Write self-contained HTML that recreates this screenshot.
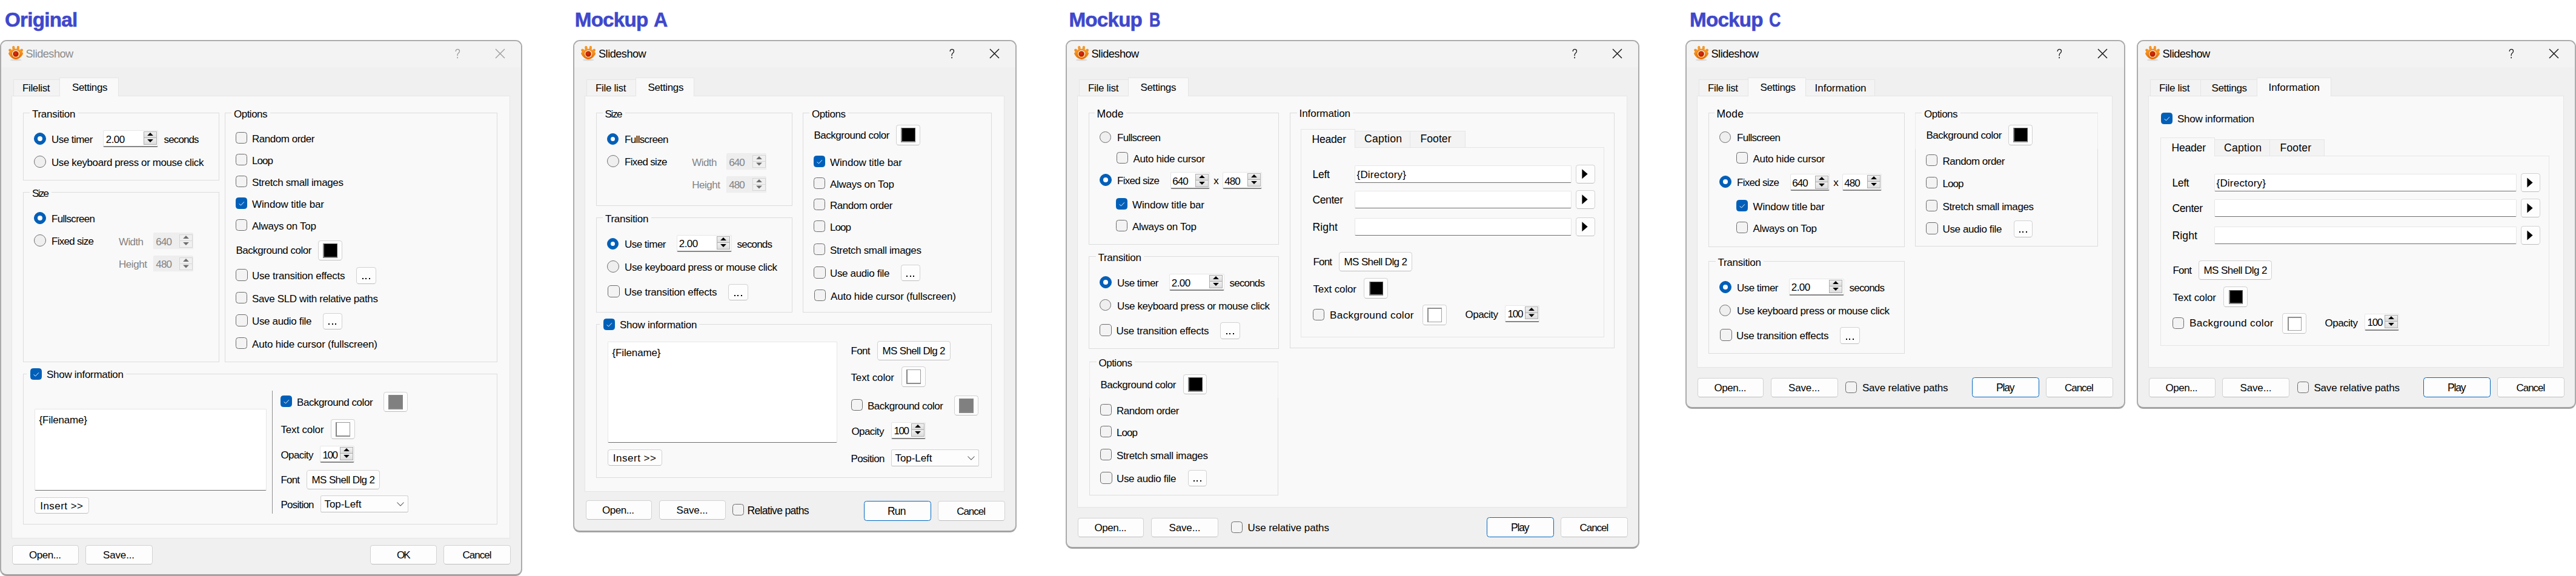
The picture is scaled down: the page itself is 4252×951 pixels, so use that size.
<!DOCTYPE html>
<html><head><meta charset="utf-8"><title>Slideshow mockups</title>
<style>
html,body{margin:0;padding:0}
body{width:4252px;height:951px;background:#fff;position:relative;overflow:hidden;font-family:"Liberation Sans",sans-serif;font-size:17px;color:#000}
body div,body span.t,.a{position:absolute;box-sizing:border-box}
.t{white-space:pre;line-height:20px;height:20px}
.dlg{background:#f0f0f0;border:2px solid #ababab;border-bottom:3px solid #a3a3a3;border-radius:11px;overflow:hidden}
.dlg .tb{left:0;top:0;right:0;height:43px;background:#f3f3f3}
.pane{background:#f9f9f9;border:1px solid #e5e5e5}
.tab{background:#f3f3f3;border:1px solid #e5e5e5;border-bottom:none}
.tab.sel{background:#f9f9f9}
.gb{border:1px solid #dcdcdc}
.cb{width:19px;height:19px;border:1.3px solid #6c6c6c;border-radius:4.5px;background:#f3f3f3}
.cb.on{width:19px;height:19px;border-radius:4.5px;background:#005fb8;border-color:#005fb8}
.cb svg{position:absolute;left:-1.3px;top:-1.3px;width:19px;height:19px}
.rb{width:20px;height:20px;border:1.3px solid #6f6f6f;border-radius:50%;background:#efefef}
.rb.on{width:19px;height:19px;background:#005fb8;border-color:#005fb8}
.rb.big{width:20px;height:20px}
.rb.big i{left:4.7px !important;top:4.7px !important;width:8px !important;height:8px !important}
.rb i{position:absolute;left:4.5px;top:4.5px;width:7.4px;height:7.4px;border-radius:50%;background:#fff}
.sp{background:#fff;border:1px solid #e6e6e6;border-bottom:2px solid #858585;border-radius:2.5px}
.sp.dis{background:#eeeeee;border-color:#ececec;border-bottom:1px solid #f6f6f6}
.sb{background:linear-gradient(#f1f1f1,#dcdcdc);border:1px solid #adadad}
.sb.dis{background:#f0f0f0;border-color:#d6d6d6}
.sb svg{position:absolute;left:-1px;top:-1px}
.sb.dn{border-top:none}
.sb.dn svg{top:0}
.btn{background:#fdfdfd;border:1px solid #d2d2d2;border-bottom-color:#bdbdbd;border-radius:4.5px}
.btn.def{border:1.6px solid #0067c0}
.ed{background:#fff;border:1px solid #e6e6e6;border-bottom:1.4px solid #6e6e6e;border-radius:2px}
</style></head>
<body>
<span class="t" style="left:8px;top:23px;font-size:33.2px;letter-spacing:-0.74px;color:#3f48cc;font-weight:bold;-webkit-text-stroke:0.6px #3f48cc;">Original</span>
<div class="dlg" style="left:0px;top:66px;width:862px;height:885px;"><div class="tb"></div></div>
<svg class="a" style="left:13px;top:75px" width="27" height="27" viewBox="0 0 27 27"><defs><linearGradient id="og" x1="0" y1="0" x2="0" y2="1"><stop offset="0" stop-color="#f9a334"/><stop offset="0.55" stop-color="#f08410"/><stop offset="1" stop-color="#e36c05"/></linearGradient><radialGradient id="rg" cx="0.45" cy="0.4" r="0.6"><stop offset="0" stop-color="#d8340f"/><stop offset="1" stop-color="#b01500"/></radialGradient></defs><ellipse cx="13.2" cy="24" rx="9.5" ry="1.5" fill="#bdbdbd" opacity=".55"/><g fill="url(#og)"><circle cx="9.3" cy="2.9" r="2.05"/><circle cx="16.9" cy="2.9" r="2.05"/><path d="M7.25 3 L11.35 3 L12.1 9 L8 9.5 Z"/><path d="M18.95 3 L14.85 3 L14.1 9 L18.2 9.5 Z"/><circle cx="3.5" cy="7.6" r="2.2"/><circle cx="22.7" cy="7.6" r="2.2"/><path d="M1.6 8.8 L5.2 6.2 L8.6 10.2 L4.6 12.6 Z"/><path d="M24.6 8.8 L21 6.2 L17.6 10.2 L21.6 12.6 Z"/><path d="M0.9 13.3 C4 8 8.8 5.6 13.1 5.6 C17.4 5.6 22.2 8 25.3 13.3 C22.3 19.6 17.6 22.9 13.1 22.9 C8.6 22.9 3.9 19.6 0.9 13.3 Z"/></g><circle cx="13.1" cy="13.9" r="6.9" fill="#d96306"/><circle cx="13.2" cy="13.9" r="6.2" fill="#fff"/><circle cx="13.1" cy="14" r="5.2" fill="#e6760f"/><circle cx="13" cy="14.1" r="4.2" fill="url(#rg)"/></svg>
<span class="t" style="left:42.5px;top:79px;font-size:18.2px;letter-spacing:-0.52px;color:#8b8b8b;">Slideshow</span>
<svg class="a" style="left:750.8px;top:80px" width="10" height="18" viewBox="0 0 10 18"><path d="M1.2 4.9 C1.2 2.5 2.7 1.4 4.4 1.4 C6.2 1.4 7.5 2.6 7.5 4.4 C7.5 6 6.6 6.9 5.6 7.8 C4.6 8.7 4.1 9.5 4.1 10.8 L4.1 12.2" fill="none" stroke="#9a9a9a" stroke-width="1.3"/><rect x="3.3" y="14.3" width="1.7" height="1.9" fill="#9a9a9a"/></svg>
<svg class="a" style="left:817px;top:80px" width="17" height="17"><path d="M1 1 L16 16 M16 1 L1 16" stroke="#9a9a9a" stroke-width="1.25" fill="none"/></svg>
<div class="pane" style="left:19px;top:158px;width:823px;height:731px;"></div>
<div class="tab" style="left:22px;top:131px;width:77px;height:27px;"></div>
<span class="t" style="left:37px;top:136px;font-size:17px;letter-spacing:-0.37px;">Filelist</span>
<div class="tab sel" style="left:98px;top:128px;width:98px;height:31px;"></div>
<span class="t" style="left:119px;top:135px;font-size:17px;letter-spacing:-0.43px;">Settings</span>
<div class="gb" style="left:38px;top:186px;width:324px;height:112px;"></div>
<div style="left:49px;top:185px;width:80px;height:3px;background:#f9f9f9"></div>
<span class="t" style="left:53px;top:179px;font-size:17px;letter-spacing:-0.28px;">Transition</span>
<div class="rb on big" style="left:56px;top:219px;width:20px;height:20px"><i></i></div>
<span class="t" style="left:85px;top:221px;font-size:17px;letter-spacing:-0.54px;">Use timer</span>
<div class="sp" style="left:170px;top:215px;width:91px;height:28px;"></div>
<div class="sb" style="left:237px;top:217px;width:22px;height:11px;"><svg width="22" height="11"><polygon points="6.1,7 15.9,7 11,1.9" fill="#000"/></svg></div>
<div class="sb dn" style="left:237px;top:228px;width:22px;height:11px;"><svg width="22" height="11"><polygon points="6.1,2 15.9,2 11,7.1" fill="#000"/></svg></div>
<span class="t" style="left:174.7px;top:221px;font-size:17px;letter-spacing:-0.5px;">2.00</span>
<span class="t" style="left:270.6px;top:221px;font-size:17px;letter-spacing:-0.89px;">seconds</span>
<div class="rb" style="left:56px;top:257px;width:20px;height:20px"></div>
<span class="t" style="left:85px;top:259px;font-size:17px;letter-spacing:-0.41px;">Use keyboard press or mouse click</span>
<div class="gb" style="left:38px;top:317px;width:324px;height:281px;"></div>
<div style="left:49px;top:316px;width:36px;height:3px;background:#f9f9f9"></div>
<span class="t" style="left:53px;top:310px;font-size:17px;letter-spacing:-1.69px;">Size</span>
<div class="rb on big" style="left:56px;top:350px;width:20px;height:20px"><i></i></div>
<span class="t" style="left:85px;top:352px;font-size:17px;letter-spacing:-0.71px;">Fullscreen</span>
<div class="rb" style="left:56px;top:387px;width:20px;height:20px"></div>
<span class="t" style="left:85px;top:389px;font-size:17px;letter-spacing:-0.72px;">Fixed size</span>
<span class="t" style="left:196px;top:390px;font-size:17px;letter-spacing:-0.62px;color:#838383;">Width</span>
<div class="sp dis" style="left:253px;top:384px;width:66px;height:28px;"></div>
<div class="sb dis" style="left:296px;top:387px;width:22px;height:11px;"><svg width="22" height="11"><polygon points="6.1,7 15.9,7 11,1.9" fill="#6e6e6e"/></svg></div>
<div class="sb dis dn" style="left:296px;top:398px;width:22px;height:11px;"><svg width="22" height="11"><polygon points="6.1,2 15.9,2 11,7.1" fill="#6e6e6e"/></svg></div>
<span class="t" style="left:257.3px;top:390px;font-size:17px;letter-spacing:-0.83px;color:#838383;">640</span>
<span class="t" style="left:196px;top:427px;font-size:17px;letter-spacing:-0.43px;color:#838383;">Height</span>
<div class="sp dis" style="left:253px;top:422px;width:66px;height:27px;"></div>
<div class="sb dis" style="left:296px;top:425px;width:22px;height:11px;"><svg width="22" height="11"><polygon points="6.1,7 15.9,7 11,1.9" fill="#6e6e6e"/></svg></div>
<div class="sb dis dn" style="left:296px;top:436px;width:22px;height:10px;"><svg width="22" height="10"><polygon points="6.1,1.5 15.9,1.5 11,6.6" fill="#6e6e6e"/></svg></div>
<span class="t" style="left:257.3px;top:427px;font-size:17px;letter-spacing:-0.83px;color:#838383;">480</span>
<div class="gb" style="left:371px;top:186px;width:450px;height:412px;"></div>
<div style="left:382px;top:185px;width:64px;height:3px;background:#f9f9f9"></div>
<span class="t" style="left:386px;top:179px;font-size:17px;letter-spacing:-0.51px;">Options</span>
<div class="cb" style="left:389px;top:218px"></div>
<span class="t" style="left:416px;top:220px;font-size:17px;letter-spacing:-0.47px;">Random order</span>
<div class="cb" style="left:389px;top:254px"></div>
<span class="t" style="left:416px;top:256px;font-size:17px;letter-spacing:-0.94px;">Loop</span>
<div class="cb" style="left:389px;top:290px"></div>
<span class="t" style="left:416px;top:292px;font-size:17px;letter-spacing:-0.36px;">Stretch small images</span>
<div class="cb on" style="left:389px;top:326px"><svg viewBox="0 0 19 19"><path d="M5.6 10.5 L8.6 12.9 L13.9 7.3" fill="none" stroke="#fff" stroke-width="0.95"/></svg></div>
<span class="t" style="left:416px;top:328px;font-size:17px;letter-spacing:-0.13px;">Window title bar</span>
<div class="cb" style="left:389px;top:362px"></div>
<span class="t" style="left:416px;top:364px;font-size:17px;letter-spacing:-0.28px;">Always on Top</span>
<span class="t" style="left:389.5px;top:404px;font-size:17px;letter-spacing:-0.49px;">Background color</span>
<div class="btn" style="left:525px;top:397px;width:40px;height:33px;"></div>
<div style="left:533px;top:402px;width:24px;height:24px;background:#000;border:1px solid #555;border-left:2px solid #858585;border-bottom:2px solid #8a8a8a"></div>
<div class="cb" style="left:389px;top:444px;width:20px;height:20px;border-radius:5px"></div>
<span class="t" style="left:416px;top:446px;font-size:17px;letter-spacing:-0.23px;">Use transition effects</span>
<div class="btn" style="left:588px;top:441px;width:33px;height:28px;"></div>
<div style="left:598px;top:459px;width:2px;height:2px;background:#000"></div>
<div style="left:603px;top:459px;width:2px;height:2px;background:#000"></div>
<div style="left:609px;top:459px;width:2px;height:2px;background:#000"></div>
<div class="cb" style="left:389px;top:482px"></div>
<span class="t" style="left:416px;top:484px;font-size:17px;letter-spacing:-0.35px;">Save SLD with relative paths</span>
<div class="cb" style="left:389px;top:519px;width:20px;height:20px;border-radius:5px"></div>
<span class="t" style="left:416px;top:521px;font-size:17px;letter-spacing:-0.35px;">Use audio file</span>
<div class="btn" style="left:533px;top:517px;width:32px;height:27px;"></div>
<div style="left:542px;top:534px;width:2px;height:2px;background:#000"></div>
<div style="left:548px;top:534px;width:2px;height:2px;background:#000"></div>
<div style="left:553px;top:534px;width:2px;height:2px;background:#000"></div>
<div class="cb" style="left:389px;top:557px"></div>
<span class="t" style="left:416px;top:559px;font-size:17px;letter-spacing:-0.2px;">Auto hide cursor (fullscreen)</span>
<div class="gb" style="left:38px;top:617px;width:783px;height:249px;"></div>
<div style="left:44px;top:607px;width:164px;height:22px;background:#f9f9f9"></div>
<div class="cb on" style="left:50px;top:608px"><svg viewBox="0 0 19 19"><path d="M5.6 10.5 L8.6 12.9 L13.9 7.3" fill="none" stroke="#fff" stroke-width="0.95"/></svg></div>
<span class="t" style="left:77px;top:609px;font-size:17px;letter-spacing:-0.29px;">Show information</span>
<div class="ed" style="left:57px;top:675px;width:383px;height:135px;"></div>
<span class="t" style="left:64.5px;top:684px;font-size:17px;letter-spacing:-0.2px;">{Filename}</span>
<div class="btn" style="left:57px;top:821px;width:90px;height:27px;"></div>
<span class="t" style="left:66.3px;top:826px;font-size:17px;letter-spacing:0.45px;">Insert &gt;&gt;</span>
<div style="left:449px;top:645px;width:1px;height:203px;background:#8e8e8e"></div>
<div class="cb on" style="left:463px;top:653px"><svg viewBox="0 0 19 19"><path d="M5.6 10.5 L8.6 12.9 L13.9 7.3" fill="none" stroke="#fff" stroke-width="0.95"/></svg></div>
<span class="t" style="left:490px;top:655px;font-size:17px;letter-spacing:-0.45px;">Background color</span>
<div class="btn" style="left:633px;top:647px;width:40px;height:33px;"></div>
<div style="left:641px;top:652px;width:24px;height:24px;background:#808080;border:1px solid #858585;border-left:2px solid #858585;border-bottom:2px solid #8a8a8a"></div>
<span class="t" style="left:463.5px;top:700px;font-size:17px;letter-spacing:-0.19px;">Text color</span>
<div class="btn" style="left:546px;top:692px;width:40px;height:33px;"></div>
<div style="left:554px;top:697px;width:24px;height:24px;background:#fff;border:1px solid #9a9a9a;border-left:2px solid #858585;border-bottom:2px solid #8a8a8a"></div>
<span class="t" style="left:463.5px;top:742px;font-size:17px;letter-spacing:-0.61px;">Opacity</span>
<div class="sp" style="left:528px;top:736px;width:57px;height:28px;"></div>
<div class="sb" style="left:561px;top:738px;width:22px;height:11px;"><svg width="22" height="11"><polygon points="6.1,7 15.9,7 11,1.9" fill="#000"/></svg></div>
<div class="sb dn" style="left:561px;top:749px;width:22px;height:11px;"><svg width="22" height="11"><polygon points="6.1,2 15.9,2 11,7.1" fill="#000"/></svg></div>
<span class="t" style="left:532.5px;top:742px;font-size:17px;letter-spacing:-1.43px;">100</span>
<span class="t" style="left:463.5px;top:783px;font-size:17px;letter-spacing:-0.84px;">Font</span>
<div class="btn" style="left:506px;top:776px;width:121px;height:32px;"></div>
<span class="t" style="left:514.5px;top:783px;font-size:17px;letter-spacing:-0.61px;">MS Shell Dlg 2</span>
<span class="t" style="left:463.5px;top:824px;font-size:17px;letter-spacing:-0.78px;">Position</span>
<div class="btn" style="left:529px;top:818px;width:145px;height:28px;border-radius:2.5px"></div>
<span class="t" style="left:535.5px;top:823px;font-size:17px;letter-spacing:-0.06px;">Top-Left</span>
<svg class="a" style="left:653.5px;top:827.95px" width="14" height="9"><path d="M1.5 1.5 L7 7 L12.5 1.5" fill="none" stroke="#4a4a4a" stroke-width="1.05"/></svg>
<div class="btn" style="left:20px;top:900px;width:110px;height:32px;"></div>
<span class="t" style="left:48px;top:907px;font-size:17px;letter-spacing:-0.46px;">Open...</span>
<div class="btn" style="left:141px;top:900px;width:111px;height:32px;"></div>
<span class="t" style="left:170px;top:907px;font-size:17px;letter-spacing:-0.15px;">Save...</span>
<div class="btn" style="left:611px;top:900px;width:110px;height:32px;"></div>
<span class="t" style="left:655px;top:907px;font-size:17px;letter-spacing:-2.07px;">OK</span>
<div class="btn" style="left:732px;top:900px;width:111px;height:32px;"></div>
<span class="t" style="left:763.5px;top:907px;font-size:17px;letter-spacing:-0.99px;">Cancel</span>
<span class="t" style="left:948.8px;top:23px;font-size:33.2px;letter-spacing:-0.8px;color:#3f48cc;font-weight:bold;-webkit-text-stroke:0.6px #3f48cc;">Mockup</span>
<span class="t" style="left:1078.6px;top:23px;font-size:33.2px;color:#3f48cc;font-weight:bold;-webkit-text-stroke:0.6px #3f48cc;transform-origin:0 0;transform:scaleX(0.97)">A</span>
<div class="dlg" style="left:946px;top:66px;width:732px;height:813px;"><div class="tb"></div></div>
<svg class="a" style="left:958px;top:75px" width="27" height="27" viewBox="0 0 27 27"><defs><linearGradient id="og" x1="0" y1="0" x2="0" y2="1"><stop offset="0" stop-color="#f9a334"/><stop offset="0.55" stop-color="#f08410"/><stop offset="1" stop-color="#e36c05"/></linearGradient><radialGradient id="rg" cx="0.45" cy="0.4" r="0.6"><stop offset="0" stop-color="#d8340f"/><stop offset="1" stop-color="#b01500"/></radialGradient></defs><ellipse cx="13.2" cy="24" rx="9.5" ry="1.5" fill="#bdbdbd" opacity=".55"/><g fill="url(#og)"><circle cx="9.3" cy="2.9" r="2.05"/><circle cx="16.9" cy="2.9" r="2.05"/><path d="M7.25 3 L11.35 3 L12.1 9 L8 9.5 Z"/><path d="M18.95 3 L14.85 3 L14.1 9 L18.2 9.5 Z"/><circle cx="3.5" cy="7.6" r="2.2"/><circle cx="22.7" cy="7.6" r="2.2"/><path d="M1.6 8.8 L5.2 6.2 L8.6 10.2 L4.6 12.6 Z"/><path d="M24.6 8.8 L21 6.2 L17.6 10.2 L21.6 12.6 Z"/><path d="M0.9 13.3 C4 8 8.8 5.6 13.1 5.6 C17.4 5.6 22.2 8 25.3 13.3 C22.3 19.6 17.6 22.9 13.1 22.9 C8.6 22.9 3.9 19.6 0.9 13.3 Z"/></g><circle cx="13.1" cy="13.9" r="6.9" fill="#d96306"/><circle cx="13.2" cy="13.9" r="6.2" fill="#fff"/><circle cx="13.1" cy="14" r="5.2" fill="#e6760f"/><circle cx="13" cy="14.1" r="4.2" fill="url(#rg)"/></svg>
<span class="t" style="left:988px;top:79px;font-size:18.2px;letter-spacing:-0.52px;color:#000;">Slideshow</span>
<svg class="a" style="left:1567px;top:80px" width="10" height="18" viewBox="0 0 10 18"><path d="M1.2 4.9 C1.2 2.5 2.7 1.4 4.4 1.4 C6.2 1.4 7.5 2.6 7.5 4.4 C7.5 6 6.6 6.9 5.6 7.8 C4.6 8.7 4.1 9.5 4.1 10.8 L4.1 12.2" fill="none" stroke="#1a1a1a" stroke-width="1.3"/><rect x="3.3" y="14.3" width="1.7" height="1.9" fill="#1a1a1a"/></svg>
<svg class="a" style="left:1633px;top:80px" width="17" height="17"><path d="M1 1 L16 16 M16 1 L1 16" stroke="#1a1a1a" stroke-width="1.45" fill="none"/></svg>
<div class="pane" style="left:965px;top:158px;width:693px;height:654px;"></div>
<div class="tab" style="left:968px;top:131px;width:82px;height:27px;"></div>
<span class="t" style="left:983px;top:136px;font-size:17px;letter-spacing:-0.3px;">File list</span>
<div class="tab sel" style="left:1049px;top:128px;width:97px;height:31px;"></div>
<span class="t" style="left:1069.5px;top:135px;font-size:17px;letter-spacing:-0.35px;">Settings</span>
<div class="gb" style="left:984px;top:186px;width:324px;height:154px;"></div>
<div style="left:995px;top:185px;width:37px;height:3px;background:#f9f9f9"></div>
<span class="t" style="left:998.5px;top:179px;font-size:17px;letter-spacing:-1.36px;">Size</span>
<div class="rb on" style="left:1002px;top:220px;width:19px;height:19px"><i></i></div>
<span class="t" style="left:1031px;top:221px;font-size:17px;letter-spacing:-0.66px;">Fullscreen</span>
<div class="rb" style="left:1002px;top:256px;width:20px;height:20px"></div>
<span class="t" style="left:1031px;top:258px;font-size:17px;letter-spacing:-0.67px;">Fixed size</span>
<span class="t" style="left:1142.2px;top:259px;font-size:17px;letter-spacing:-0.54px;color:#838383;">Width</span>
<div class="sp dis" style="left:1199px;top:253px;width:66px;height:28px;"></div>
<div class="sb dis" style="left:1242px;top:256px;width:22px;height:11px;"><svg width="22" height="11"><polygon points="6.1,7 15.9,7 11,1.9" fill="#6e6e6e"/></svg></div>
<div class="sb dis dn" style="left:1242px;top:267px;width:22px;height:10px;"><svg width="22" height="10"><polygon points="6.1,1.5 15.9,1.5 11,6.6" fill="#6e6e6e"/></svg></div>
<span class="t" style="left:1203.3px;top:259px;font-size:17px;letter-spacing:-0.93px;color:#838383;">640</span>
<span class="t" style="left:1142.2px;top:296px;font-size:17px;letter-spacing:-0.47px;color:#838383;">Height</span>
<div class="sp dis" style="left:1199px;top:291px;width:66px;height:28px;"></div>
<div class="sb dis" style="left:1242px;top:294px;width:22px;height:11px;"><svg width="22" height="11"><polygon points="6.1,7 15.9,7 11,1.9" fill="#6e6e6e"/></svg></div>
<div class="sb dis dn" style="left:1242px;top:305px;width:22px;height:10px;"><svg width="22" height="10"><polygon points="6.1,1.5 15.9,1.5 11,6.6" fill="#6e6e6e"/></svg></div>
<span class="t" style="left:1203.3px;top:296px;font-size:17px;letter-spacing:-0.93px;color:#838383;">480</span>
<div class="gb" style="left:984px;top:359px;width:324px;height:157px;"></div>
<div style="left:995px;top:358px;width:80px;height:3px;background:#f9f9f9"></div>
<span class="t" style="left:999px;top:352px;font-size:17px;letter-spacing:-0.28px;">Transition</span>
<div class="rb on" style="left:1002px;top:393px;width:19px;height:19px"><i></i></div>
<span class="t" style="left:1031px;top:394px;font-size:17px;letter-spacing:-0.53px;">Use timer</span>
<div class="sp" style="left:1117px;top:388px;width:91px;height:28px;"></div>
<div class="sb" style="left:1183px;top:390px;width:22px;height:11px;"><svg width="22" height="11"><polygon points="6.1,7 15.9,7 11,1.9" fill="#000"/></svg></div>
<div class="sb dn" style="left:1183px;top:401px;width:22px;height:11px;"><svg width="22" height="11"><polygon points="6.1,2 15.9,2 11,7.1" fill="#000"/></svg></div>
<span class="t" style="left:1120.7px;top:393px;font-size:17px;letter-spacing:-0.5px;">2.00</span>
<span class="t" style="left:1216.6px;top:394px;font-size:17px;letter-spacing:-0.82px;">seconds</span>
<div class="rb" style="left:1002px;top:430px;width:20px;height:20px"></div>
<span class="t" style="left:1031px;top:432px;font-size:17px;letter-spacing:-0.39px;">Use keyboard press or mouse click</span>
<div class="cb" style="left:1003px;top:471px;width:20px;height:20px;border-radius:5px"></div>
<span class="t" style="left:1030.5px;top:473px;font-size:17px;letter-spacing:-0.26px;">Use transition effects</span>
<div class="btn" style="left:1202px;top:469px;width:33px;height:27px;"></div>
<div style="left:1212px;top:487px;width:2px;height:2px;background:#000"></div>
<div style="left:1217px;top:487px;width:2px;height:2px;background:#000"></div>
<div style="left:1223px;top:487px;width:2px;height:2px;background:#000"></div>
<div class="gb" style="left:1325px;top:186px;width:312px;height:330px;"></div>
<div style="left:1336px;top:185px;width:64px;height:3px;background:#f9f9f9"></div>
<span class="t" style="left:1340px;top:179px;font-size:17px;letter-spacing:-0.43px;">Options</span>
<span class="t" style="left:1343.5px;top:214px;font-size:17px;letter-spacing:-0.49px;">Background color</span>
<div class="btn" style="left:1479px;top:206px;width:40px;height:34px;"></div>
<div style="left:1487px;top:211px;width:24px;height:24px;background:#000;border:1px solid #555;border-left:2px solid #858585;border-bottom:2px solid #8a8a8a"></div>
<div class="cb on" style="left:1343px;top:257px"><svg viewBox="0 0 19 19"><path d="M5.6 10.5 L8.6 12.9 L13.9 7.3" fill="none" stroke="#fff" stroke-width="0.95"/></svg></div>
<span class="t" style="left:1370px;top:259px;font-size:17px;letter-spacing:-0.13px;">Window title bar</span>
<div class="cb" style="left:1343px;top:293px"></div>
<span class="t" style="left:1370px;top:295px;font-size:17px;letter-spacing:-0.28px;">Always on Top</span>
<div class="cb" style="left:1343px;top:328px"></div>
<span class="t" style="left:1370px;top:330px;font-size:17px;letter-spacing:-0.47px;">Random order</span>
<div class="cb" style="left:1343px;top:364px"></div>
<span class="t" style="left:1370px;top:366px;font-size:17px;letter-spacing:-0.94px;">Loop</span>
<div class="cb" style="left:1343px;top:402px"></div>
<span class="t" style="left:1370px;top:404px;font-size:17px;letter-spacing:-0.36px;">Stretch small images</span>
<div class="cb" style="left:1343px;top:440px;width:20px;height:20px;border-radius:5px"></div>
<span class="t" style="left:1370px;top:442px;font-size:17px;letter-spacing:-0.35px;">Use audio file</span>
<div class="btn" style="left:1487px;top:437px;width:32px;height:27px;"></div>
<div style="left:1496px;top:455px;width:2px;height:2px;background:#000"></div>
<div style="left:1502px;top:455px;width:2px;height:2px;background:#000"></div>
<div style="left:1507px;top:455px;width:2px;height:2px;background:#000"></div>
<div class="cb" style="left:1344px;top:478px"></div>
<span class="t" style="left:1371px;top:480px;font-size:17px;letter-spacing:-0.2px;">Auto hide cursor (fullscreen)</span>
<div class="gb" style="left:984px;top:535px;width:653px;height:254px;"></div>
<div style="left:990px;top:525px;width:164px;height:22px;background:#f9f9f9"></div>
<div class="cb on" style="left:996px;top:526px"><svg viewBox="0 0 19 19"><path d="M5.6 10.5 L8.6 12.9 L13.9 7.3" fill="none" stroke="#fff" stroke-width="0.95"/></svg></div>
<span class="t" style="left:1023px;top:527px;font-size:17px;letter-spacing:-0.26px;">Show information</span>
<div class="ed" style="left:1003px;top:564px;width:379px;height:167px;"></div>
<span class="t" style="left:1010.5px;top:573px;font-size:17px;letter-spacing:-0.14px;">{Filename}</span>
<div class="btn" style="left:1003px;top:742px;width:90px;height:27px;"></div>
<span class="t" style="left:1011.8px;top:747px;font-size:17px;letter-spacing:0.51px;">Insert &gt;&gt;</span>
<span class="t" style="left:1404.5px;top:570px;font-size:17px;letter-spacing:-0.68px;">Font</span>
<div class="btn" style="left:1448px;top:563px;width:121px;height:32px;"></div>
<span class="t" style="left:1456.5px;top:570px;font-size:17px;letter-spacing:-0.65px;">MS Shell Dlg 2</span>
<span class="t" style="left:1404.5px;top:614px;font-size:17px;letter-spacing:-0.14px;">Text color</span>
<div class="btn" style="left:1488px;top:605px;width:40px;height:34px;"></div>
<div style="left:1496px;top:610px;width:24px;height:24px;background:#fff;border:1px solid #9a9a9a;border-left:2px solid #858585;border-bottom:2px solid #8a8a8a"></div>
<div class="cb" style="left:1405px;top:659px"></div>
<span class="t" style="left:1432px;top:661px;font-size:17px;letter-spacing:-0.49px;">Background color</span>
<div class="btn" style="left:1575px;top:653px;width:40px;height:33px;"></div>
<div style="left:1583px;top:658px;width:24px;height:24px;background:#808080;border:1px solid #858585;border-left:2px solid #858585;border-bottom:2px solid #8a8a8a"></div>
<span class="t" style="left:1405.5px;top:703px;font-size:17px;letter-spacing:-0.61px;">Opacity</span>
<div class="sp" style="left:1471px;top:697px;width:57px;height:28px;"></div>
<div class="sb" style="left:1504px;top:699px;width:22px;height:11px;"><svg width="22" height="11"><polygon points="6.1,7 15.9,7 11,1.9" fill="#000"/></svg></div>
<div class="sb dn" style="left:1504px;top:710px;width:22px;height:11px;"><svg width="22" height="11"><polygon points="6.1,2 15.9,2 11,7.1" fill="#000"/></svg></div>
<span class="t" style="left:1475.5px;top:702px;font-size:17px;letter-spacing:-1.43px;">100</span>
<span class="t" style="left:1404.5px;top:748px;font-size:17px;letter-spacing:-0.64px;">Position</span>
<div class="btn" style="left:1471px;top:742px;width:145px;height:28px;border-radius:2.5px"></div>
<span class="t" style="left:1477.5px;top:747px;font-size:17px;letter-spacing:-0.06px;">Top-Left</span>
<svg class="a" style="left:1595.5px;top:752.1px" width="14" height="9"><path d="M1.5 1.5 L7 7 L12.5 1.5" fill="none" stroke="#4a4a4a" stroke-width="1.05"/></svg>
<div class="btn" style="left:967px;top:826px;width:109px;height:32px;"></div>
<span class="t" style="left:994px;top:833px;font-size:17px;letter-spacing:-0.46px;">Open...</span>
<div class="btn" style="left:1088px;top:826px;width:110px;height:32px;"></div>
<span class="t" style="left:1116.5px;top:833px;font-size:17px;letter-spacing:-0.15px;">Save...</span>
<div class="cb" style="left:1209px;top:832px"></div>
<span class="t" style="left:1233.5px;top:833px;font-size:17.6px;letter-spacing:-0.73px;">Relative paths</span>
<div class="btn def" style="left:1426px;top:827px;width:111px;height:33px;"></div>
<span class="t" style="left:1465px;top:834px;font-size:17.5px;letter-spacing:-0.8px;">Run</span>
<div class="btn" style="left:1548px;top:827px;width:111px;height:33px;"></div>
<span class="t" style="left:1579.2px;top:835px;font-size:17px;letter-spacing:-1.03px;">Cancel</span>
<span class="t" style="left:1764.5px;top:23px;font-size:33.2px;letter-spacing:-0.8px;color:#3f48cc;font-weight:bold;-webkit-text-stroke:0.6px #3f48cc;">Mockup</span>
<span class="t" style="left:1896.6px;top:23px;font-size:33.2px;color:#3f48cc;font-weight:bold;-webkit-text-stroke:0.6px #3f48cc;transform-origin:0 0;transform:scaleX(0.77)">B</span>
<div class="dlg" style="left:1759px;top:66px;width:947px;height:840px;"><div class="tb"></div></div>
<svg class="a" style="left:1772px;top:75px" width="27" height="27" viewBox="0 0 27 27"><defs><linearGradient id="og" x1="0" y1="0" x2="0" y2="1"><stop offset="0" stop-color="#f9a334"/><stop offset="0.55" stop-color="#f08410"/><stop offset="1" stop-color="#e36c05"/></linearGradient><radialGradient id="rg" cx="0.45" cy="0.4" r="0.6"><stop offset="0" stop-color="#d8340f"/><stop offset="1" stop-color="#b01500"/></radialGradient></defs><ellipse cx="13.2" cy="24" rx="9.5" ry="1.5" fill="#bdbdbd" opacity=".55"/><g fill="url(#og)"><circle cx="9.3" cy="2.9" r="2.05"/><circle cx="16.9" cy="2.9" r="2.05"/><path d="M7.25 3 L11.35 3 L12.1 9 L8 9.5 Z"/><path d="M18.95 3 L14.85 3 L14.1 9 L18.2 9.5 Z"/><circle cx="3.5" cy="7.6" r="2.2"/><circle cx="22.7" cy="7.6" r="2.2"/><path d="M1.6 8.8 L5.2 6.2 L8.6 10.2 L4.6 12.6 Z"/><path d="M24.6 8.8 L21 6.2 L17.6 10.2 L21.6 12.6 Z"/><path d="M0.9 13.3 C4 8 8.8 5.6 13.1 5.6 C17.4 5.6 22.2 8 25.3 13.3 C22.3 19.6 17.6 22.9 13.1 22.9 C8.6 22.9 3.9 19.6 0.9 13.3 Z"/></g><circle cx="13.1" cy="13.9" r="6.9" fill="#d96306"/><circle cx="13.2" cy="13.9" r="6.2" fill="#fff"/><circle cx="13.1" cy="14" r="5.2" fill="#e6760f"/><circle cx="13" cy="14.1" r="4.2" fill="url(#rg)"/></svg>
<span class="t" style="left:1801.5px;top:79px;font-size:18.2px;letter-spacing:-0.52px;color:#000;">Slideshow</span>
<svg class="a" style="left:2595px;top:80px" width="10" height="18" viewBox="0 0 10 18"><path d="M1.2 4.9 C1.2 2.5 2.7 1.4 4.4 1.4 C6.2 1.4 7.5 2.6 7.5 4.4 C7.5 6 6.6 6.9 5.6 7.8 C4.6 8.7 4.1 9.5 4.1 10.8 L4.1 12.2" fill="none" stroke="#1a1a1a" stroke-width="1.3"/><rect x="3.3" y="14.3" width="1.7" height="1.9" fill="#1a1a1a"/></svg>
<svg class="a" style="left:2661px;top:80px" width="17" height="17"><path d="M1 1 L16 16 M16 1 L1 16" stroke="#1a1a1a" stroke-width="1.45" fill="none"/></svg>
<div class="pane" style="left:1778px;top:158px;width:908px;height:680px;"></div>
<div class="tab" style="left:1781px;top:131px;width:82px;height:27px;"></div>
<span class="t" style="left:1796px;top:136px;font-size:17px;letter-spacing:-0.3px;">File list</span>
<div class="tab sel" style="left:1862px;top:128px;width:100px;height:31px;"></div>
<span class="t" style="left:1882.5px;top:135px;font-size:17px;letter-spacing:-0.35px;">Settings</span>
<div class="gb" style="left:1797px;top:186px;width:314px;height:218px;"></div>
<div style="left:1807px;top:185px;width:52px;height:3px;background:#f9f9f9"></div>
<span class="t" style="left:1810.5px;top:178px;font-size:17.6px;">Mode</span>
<div class="rb" style="left:1815px;top:217px;width:19px;height:19px"></div>
<span class="t" style="left:1844px;top:218px;font-size:17px;letter-spacing:-0.71px;">Fullscreen</span>
<div class="cb" style="left:1843px;top:251px"></div>
<span class="t" style="left:1870.5px;top:253px;font-size:17px;letter-spacing:-0.35px;">Auto hide cursor</span>
<div class="rb on big" style="left:1815px;top:287px;width:20px;height:20px"><i></i></div>
<span class="t" style="left:1844px;top:289px;font-size:17px;letter-spacing:-0.72px;">Fixed size</span>
<div class="sp" style="left:1932px;top:284px;width:65px;height:28px;"></div>
<div class="sb" style="left:1973px;top:287px;width:22px;height:11px;"><svg width="22" height="11"><polygon points="6.1,7 15.9,7 11,1.9" fill="#000"/></svg></div>
<div class="sb dn" style="left:1973px;top:298px;width:22px;height:11px;"><svg width="22" height="11"><polygon points="6.1,2 15.9,2 11,7.1" fill="#000"/></svg></div>
<span class="t" style="left:1935.2px;top:290px;font-size:17px;letter-spacing:-0.93px;">640</span>
<span class="t" style="left:2003.3px;top:289px;font-size:17px;">x</span>
<div class="sp" style="left:2018px;top:284px;width:65px;height:28px;"></div>
<div class="sb" style="left:2059px;top:286px;width:22px;height:11px;"><svg width="22" height="11"><polygon points="6.1,7 15.9,7 11,1.9" fill="#000"/></svg></div>
<div class="sb dn" style="left:2059px;top:297px;width:22px;height:11px;"><svg width="22" height="11"><polygon points="6.1,2 15.9,2 11,7.1" fill="#000"/></svg></div>
<span class="t" style="left:2021.2px;top:290px;font-size:17px;letter-spacing:-0.88px;">480</span>
<div class="cb on" style="left:1842px;top:327px"><svg viewBox="0 0 19 19"><path d="M5.6 10.5 L8.6 12.9 L13.9 7.3" fill="none" stroke="#fff" stroke-width="0.95"/></svg></div>
<span class="t" style="left:1869px;top:329px;font-size:17px;letter-spacing:-0.13px;">Window title bar</span>
<div class="cb" style="left:1842px;top:363px"></div>
<span class="t" style="left:1869px;top:365px;font-size:17px;letter-spacing:-0.28px;">Always on Top</span>
<div class="gb" style="left:1797px;top:423px;width:314px;height:153px;"></div>
<div style="left:1809px;top:422px;width:79px;height:3px;background:#f9f9f9"></div>
<span class="t" style="left:1812.5px;top:416px;font-size:17px;letter-spacing:-0.28px;">Transition</span>
<div class="rb on big" style="left:1815px;top:456px;width:20px;height:20px"><i></i></div>
<span class="t" style="left:1844px;top:458px;font-size:17px;letter-spacing:-0.53px;">Use timer</span>
<div class="sp" style="left:1930px;top:452px;width:91px;height:28px;"></div>
<div class="sb" style="left:1996px;top:454px;width:22px;height:11px;"><svg width="22" height="11"><polygon points="6.1,7 15.9,7 11,1.9" fill="#000"/></svg></div>
<div class="sb dn" style="left:1996px;top:465px;width:22px;height:11px;"><svg width="22" height="11"><polygon points="6.1,2 15.9,2 11,7.1" fill="#000"/></svg></div>
<span class="t" style="left:1933.7px;top:458px;font-size:17px;letter-spacing:-0.5px;">2.00</span>
<span class="t" style="left:2029.6px;top:458px;font-size:17px;letter-spacing:-0.82px;">seconds</span>
<div class="rb" style="left:1815px;top:494px;width:19px;height:19px"></div>
<span class="t" style="left:1844px;top:496px;font-size:17px;letter-spacing:-0.39px;">Use keyboard press or mouse click</span>
<div class="cb" style="left:1815px;top:535px;width:20px;height:20px;border-radius:5px"></div>
<span class="t" style="left:1842.5px;top:537px;font-size:17px;letter-spacing:-0.26px;">Use transition effects</span>
<div class="btn" style="left:2014px;top:532px;width:33px;height:28px;"></div>
<div style="left:2024px;top:550px;width:2px;height:2px;background:#000"></div>
<div style="left:2029px;top:550px;width:2px;height:2px;background:#000"></div>
<div style="left:2035px;top:550px;width:2px;height:2px;background:#000"></div>
<div class="gb" style="left:1798px;top:597px;width:312px;height:221px;"></div>
<div style="left:1810px;top:596px;width:63px;height:3px;background:#f9f9f9"></div>
<span class="t" style="left:1813.5px;top:590px;font-size:17px;letter-spacing:-0.51px;">Options</span>
<div style="left:1798px;top:598px;width:1px;height:59px;background:#ebebeb"></div>
<div style="left:2109px;top:598px;width:1px;height:59px;background:#ebebeb"></div>
<span class="t" style="left:1816.5px;top:626px;font-size:17px;letter-spacing:-0.49px;">Background color</span>
<div class="btn" style="left:1953px;top:618px;width:39px;height:33px;"></div>
<div style="left:1961px;top:623px;width:24px;height:24px;background:#000;border:1px solid #555;border-left:2px solid #858585;border-bottom:2px solid #8a8a8a"></div>
<div class="cb" style="left:1816px;top:667px"></div>
<span class="t" style="left:1843px;top:669px;font-size:17px;letter-spacing:-0.47px;">Random order</span>
<div class="cb" style="left:1816px;top:703px"></div>
<span class="t" style="left:1843px;top:705px;font-size:17px;letter-spacing:-0.94px;">Loop</span>
<div class="cb" style="left:1816px;top:741px"></div>
<span class="t" style="left:1843px;top:743px;font-size:17px;letter-spacing:-0.36px;">Stretch small images</span>
<div class="cb" style="left:1816px;top:779px;width:20px;height:20px;border-radius:5px"></div>
<span class="t" style="left:1843px;top:781px;font-size:17px;letter-spacing:-0.35px;">Use audio file</span>
<div class="btn" style="left:1961px;top:776px;width:31px;height:27px;"></div>
<div style="left:1970px;top:793px;width:2px;height:2px;background:#000"></div>
<div style="left:1975px;top:793px;width:2px;height:2px;background:#000"></div>
<div style="left:1981px;top:793px;width:2px;height:2px;background:#000"></div>
<div class="gb" style="left:2129px;top:186px;width:536px;height:389px;"></div>
<div style="left:2141px;top:185px;width:92px;height:3px;background:#f9f9f9"></div>
<span class="t" style="left:2144.5px;top:178px;font-size:17px;letter-spacing:-0.05px;">Information</span>
<div class="pane" style="left:2147px;top:243px;width:501px;height:314px;"></div>
<div class="tab sel" style="left:2147px;top:213px;width:90px;height:31px;"></div>
<span class="t" style="left:2165.5px;top:220px;font-size:17.6px;letter-spacing:-0.24px;">Header</span>
<div class="tab" style="left:2236px;top:216px;width:92px;height:27px;"></div>
<span class="t" style="left:2252px;top:219px;font-size:17.6px;letter-spacing:0.22px;">Caption</span>
<div class="tab" style="left:2327px;top:216px;width:92px;height:27px;"></div>
<span class="t" style="left:2344.5px;top:219px;font-size:17.6px;letter-spacing:0.03px;">Footer</span>
<span class="t" style="left:2166.5px;top:278px;font-size:17.6px;letter-spacing:-0.29px;">Left</span>
<div class="ed" style="left:2236px;top:273px;width:358px;height:29px;"></div>
<span class="t" style="left:2239.5px;top:279px;font-size:17px;letter-spacing:0.21px;">{Directory}</span>
<div class="btn" style="left:2601px;top:272px;width:32px;height:31px;"><svg width="31.5" height="30.6" style="position:absolute;left:-1px;top:-1px"><polygon points="10.35,7.3 10.35,23.3 19.65,15.3" fill="#000"/></svg></div>
<span class="t" style="left:2166.5px;top:320px;font-size:17.6px;letter-spacing:-0.46px;">Center</span>
<div class="ed" style="left:2236px;top:315px;width:358px;height:29px;"></div>
<div class="btn" style="left:2601px;top:314px;width:32px;height:31px;"><svg width="31.5" height="30.6" style="position:absolute;left:-1px;top:-1px"><polygon points="10.35,7.3 10.35,23.3 19.65,15.3" fill="#000"/></svg></div>
<span class="t" style="left:2166.5px;top:365px;font-size:17.6px;letter-spacing:0.11px;">Right</span>
<div class="ed" style="left:2236px;top:360px;width:358px;height:29px;"></div>
<div class="btn" style="left:2601px;top:359px;width:32px;height:31px;"><svg width="31.5" height="30.6" style="position:absolute;left:-1px;top:-1px"><polygon points="10.35,7.3 10.35,23.3 19.65,15.3" fill="#000"/></svg></div>
<span class="t" style="left:2167.5px;top:423px;font-size:17px;letter-spacing:-0.84px;">Font</span>
<div class="btn" style="left:2210px;top:416px;width:121px;height:32px;"></div>
<span class="t" style="left:2218.5px;top:423px;font-size:17px;letter-spacing:-0.61px;">MS Shell Dlg 2</span>
<span class="t" style="left:2167.5px;top:468px;font-size:17px;letter-spacing:-0.14px;">Text color</span>
<div class="btn" style="left:2251px;top:459px;width:40px;height:34px;"></div>
<div style="left:2260px;top:465px;width:23px;height:23px;background:#000;border:1px solid #555;border-left:2px solid #858585;border-bottom:2px solid #8a8a8a"></div>
<div class="cb" style="left:2167px;top:510px"></div>
<span class="t" style="left:2195px;top:510px;font-size:17.2px;letter-spacing:0.32px;">Background color</span>
<div class="btn" style="left:2348px;top:503px;width:40px;height:34px;"></div>
<div style="left:2356px;top:508px;width:24px;height:24px;background:#fff;border:1px solid #a2a2a2;border-left:2px solid #8e8e8e;border-top:2px solid #8e8e8e"></div>
<span class="t" style="left:2418.5px;top:510px;font-size:17px;letter-spacing:-0.52px;">Opacity</span>
<div class="sp" style="left:2484px;top:504px;width:57px;height:28px;"></div>
<div class="sb" style="left:2517px;top:506px;width:22px;height:11px;"><svg width="22" height="11"><polygon points="6.1,7 15.9,7 11,1.9" fill="#000"/></svg></div>
<div class="sb dn" style="left:2517px;top:517px;width:22px;height:10px;"><svg width="22" height="10"><polygon points="6.1,1.5 15.9,1.5 11,6.6" fill="#000"/></svg></div>
<span class="t" style="left:2488.5px;top:509px;font-size:17px;letter-spacing:-1.18px;">100</span>
<div class="btn" style="left:1779px;top:855px;width:109px;height:32px;"></div>
<span class="t" style="left:1806.5px;top:862px;font-size:17px;letter-spacing:-0.46px;">Open...</span>
<div class="btn" style="left:1900px;top:855px;width:111px;height:32px;"></div>
<span class="t" style="left:1929.5px;top:862px;font-size:17px;letter-spacing:-0.15px;">Save...</span>
<div class="cb" style="left:2032px;top:861px"></div>
<span class="t" style="left:2059.6px;top:862px;font-size:17px;letter-spacing:-0.1px;">Use relative paths</span>
<div class="btn def" style="left:2454px;top:854px;width:111px;height:33px;"></div>
<span class="t" style="left:2494px;top:861px;font-size:17.5px;letter-spacing:-1.18px;">Play</span>
<div class="btn" style="left:2576px;top:854px;width:111px;height:33px;"></div>
<span class="t" style="left:2607.5px;top:862px;font-size:17px;letter-spacing:-1.03px;">Cancel</span>
<span class="t" style="left:2789.1px;top:23px;font-size:33.2px;letter-spacing:-0.8px;color:#3f48cc;font-weight:bold;-webkit-text-stroke:0.6px #3f48cc;">Mockup</span>
<span class="t" style="left:2919.7px;top:23px;font-size:33.2px;color:#3f48cc;font-weight:bold;-webkit-text-stroke:0.6px #3f48cc;transform-origin:0 0;transform:scaleX(0.81)">C</span>
<div class="dlg" style="left:2782px;top:66px;width:726px;height:609px;"><div class="tb"></div></div>
<svg class="a" style="left:2795px;top:75px" width="27" height="27" viewBox="0 0 27 27"><defs><linearGradient id="og" x1="0" y1="0" x2="0" y2="1"><stop offset="0" stop-color="#f9a334"/><stop offset="0.55" stop-color="#f08410"/><stop offset="1" stop-color="#e36c05"/></linearGradient><radialGradient id="rg" cx="0.45" cy="0.4" r="0.6"><stop offset="0" stop-color="#d8340f"/><stop offset="1" stop-color="#b01500"/></radialGradient></defs><ellipse cx="13.2" cy="24" rx="9.5" ry="1.5" fill="#bdbdbd" opacity=".55"/><g fill="url(#og)"><circle cx="9.3" cy="2.9" r="2.05"/><circle cx="16.9" cy="2.9" r="2.05"/><path d="M7.25 3 L11.35 3 L12.1 9 L8 9.5 Z"/><path d="M18.95 3 L14.85 3 L14.1 9 L18.2 9.5 Z"/><circle cx="3.5" cy="7.6" r="2.2"/><circle cx="22.7" cy="7.6" r="2.2"/><path d="M1.6 8.8 L5.2 6.2 L8.6 10.2 L4.6 12.6 Z"/><path d="M24.6 8.8 L21 6.2 L17.6 10.2 L21.6 12.6 Z"/><path d="M0.9 13.3 C4 8 8.8 5.6 13.1 5.6 C17.4 5.6 22.2 8 25.3 13.3 C22.3 19.6 17.6 22.9 13.1 22.9 C8.6 22.9 3.9 19.6 0.9 13.3 Z"/></g><circle cx="13.1" cy="13.9" r="6.9" fill="#d96306"/><circle cx="13.2" cy="13.9" r="6.2" fill="#fff"/><circle cx="13.1" cy="14" r="5.2" fill="#e6760f"/><circle cx="13" cy="14.1" r="4.2" fill="url(#rg)"/></svg>
<span class="t" style="left:2824.5px;top:79px;font-size:18.2px;letter-spacing:-0.52px;color:#000;">Slideshow</span>
<svg class="a" style="left:3395.2px;top:80px" width="10" height="18" viewBox="0 0 10 18"><path d="M1.2 4.9 C1.2 2.5 2.7 1.4 4.4 1.4 C6.2 1.4 7.5 2.6 7.5 4.4 C7.5 6 6.6 6.9 5.6 7.8 C4.6 8.7 4.1 9.5 4.1 10.8 L4.1 12.2" fill="none" stroke="#1a1a1a" stroke-width="1.3"/><rect x="3.3" y="14.3" width="1.7" height="1.9" fill="#1a1a1a"/></svg>
<svg class="a" style="left:3462px;top:80px" width="17" height="17"><path d="M1 1 L16 16 M16 1 L1 16" stroke="#1a1a1a" stroke-width="1.45" fill="none"/></svg>
<div class="pane" style="left:2801px;top:158px;width:686px;height:449px;"></div>
<div class="tab" style="left:2804px;top:131px;width:82px;height:27px;"></div>
<span class="t" style="left:2819px;top:136px;font-size:17px;letter-spacing:-0.36px;">File list</span>
<div class="tab" style="left:2980px;top:131px;width:115px;height:27px;"></div>
<span class="t" style="left:2995.5px;top:136px;font-size:17px;">Information</span>
<div class="tab sel" style="left:2885px;top:128px;width:96px;height:31px;"></div>
<span class="t" style="left:2905.5px;top:135px;font-size:17px;letter-spacing:-0.42px;">Settings</span>
<div class="gb" style="left:2820px;top:186px;width:324px;height:222px;"></div>
<div style="left:2830px;top:185px;width:52px;height:3px;background:#f9f9f9"></div>
<span class="t" style="left:2833.5px;top:178px;font-size:17.6px;letter-spacing:0.16px;">Mode</span>
<div class="rb" style="left:2838px;top:217px;width:19px;height:19px"></div>
<span class="t" style="left:2867px;top:218px;font-size:17px;letter-spacing:-0.71px;">Fullscreen</span>
<div class="cb" style="left:2866px;top:251px"></div>
<span class="t" style="left:2893.5px;top:253px;font-size:17px;letter-spacing:-0.32px;">Auto hide cursor</span>
<div class="rb on big" style="left:2838px;top:290px;width:20px;height:20px"><i></i></div>
<span class="t" style="left:2867px;top:292px;font-size:17px;letter-spacing:-0.72px;">Fixed size</span>
<div class="sp" style="left:2955px;top:287px;width:65px;height:28px;"></div>
<div class="sb" style="left:2996px;top:290px;width:22px;height:11px;"><svg width="22" height="11"><polygon points="6.1,7 15.9,7 11,1.9" fill="#000"/></svg></div>
<div class="sb dn" style="left:2996px;top:301px;width:22px;height:11px;"><svg width="22" height="11"><polygon points="6.1,2 15.9,2 11,7.1" fill="#000"/></svg></div>
<span class="t" style="left:2958.2px;top:293px;font-size:17px;letter-spacing:-0.93px;">640</span>
<span class="t" style="left:3026.3px;top:292px;font-size:17px;">x</span>
<div class="sp" style="left:3041px;top:287px;width:65px;height:28px;"></div>
<div class="sb" style="left:3082px;top:289px;width:22px;height:11px;"><svg width="22" height="11"><polygon points="6.1,7 15.9,7 11,1.9" fill="#000"/></svg></div>
<div class="sb dn" style="left:3082px;top:300px;width:22px;height:11px;"><svg width="22" height="11"><polygon points="6.1,2 15.9,2 11,7.1" fill="#000"/></svg></div>
<span class="t" style="left:3044.2px;top:293px;font-size:17px;letter-spacing:-0.88px;">480</span>
<div class="cb on" style="left:2866px;top:330px"><svg viewBox="0 0 19 19"><path d="M5.6 10.5 L8.6 12.9 L13.9 7.3" fill="none" stroke="#fff" stroke-width="0.95"/></svg></div>
<span class="t" style="left:2893.5px;top:332px;font-size:17px;letter-spacing:-0.16px;">Window title bar</span>
<div class="cb" style="left:2866px;top:366px"></div>
<span class="t" style="left:2893.5px;top:368px;font-size:17px;letter-spacing:-0.32px;">Always on Top</span>
<div class="gb" style="left:2820px;top:431px;width:324px;height:153px;"></div>
<div style="left:2832px;top:430px;width:79px;height:3px;background:#f9f9f9"></div>
<span class="t" style="left:2835.5px;top:424px;font-size:17px;letter-spacing:-0.28px;">Transition</span>
<div class="rb on big" style="left:2838px;top:464px;width:20px;height:20px"><i></i></div>
<span class="t" style="left:2867px;top:466px;font-size:17px;letter-spacing:-0.53px;">Use timer</span>
<div class="sp" style="left:2953px;top:460px;width:91px;height:28px;"></div>
<div class="sb" style="left:3019px;top:462px;width:22px;height:11px;"><svg width="22" height="11"><polygon points="6.1,7 15.9,7 11,1.9" fill="#000"/></svg></div>
<div class="sb dn" style="left:3019px;top:473px;width:22px;height:11px;"><svg width="22" height="11"><polygon points="6.1,2 15.9,2 11,7.1" fill="#000"/></svg></div>
<span class="t" style="left:2956.7px;top:465px;font-size:17px;letter-spacing:-0.5px;">2.00</span>
<span class="t" style="left:3052.6px;top:466px;font-size:17px;letter-spacing:-0.82px;">seconds</span>
<div class="rb" style="left:2838px;top:503px;width:19px;height:19px"></div>
<span class="t" style="left:2867px;top:504px;font-size:17px;letter-spacing:-0.39px;">Use keyboard press or mouse click</span>
<div class="cb" style="left:2839px;top:543px;width:20px;height:20px;border-radius:5px"></div>
<span class="t" style="left:2866px;top:545px;font-size:17px;letter-spacing:-0.28px;">Use transition effects</span>
<div class="btn" style="left:3037px;top:540px;width:33px;height:28px;"></div>
<div style="left:3047px;top:559px;width:2px;height:2px;background:#000"></div>
<div style="left:3052px;top:559px;width:2px;height:2px;background:#000"></div>
<div style="left:3058px;top:559px;width:2px;height:2px;background:#000"></div>
<div class="gb" style="left:3161px;top:186px;width:302px;height:221px;"></div>
<div style="left:3172px;top:185px;width:64px;height:3px;background:#f9f9f9"></div>
<span class="t" style="left:3176px;top:179px;font-size:17px;letter-spacing:-0.51px;">Options</span>
<div style="left:3161px;top:187px;width:1px;height:59px;background:#ebebeb"></div>
<div style="left:3462px;top:187px;width:1px;height:59px;background:#ebebeb"></div>
<span class="t" style="left:3179.5px;top:214px;font-size:17px;letter-spacing:-0.49px;">Background color</span>
<div class="btn" style="left:3315px;top:206px;width:40px;height:34px;"></div>
<div style="left:3323px;top:211px;width:24px;height:24px;background:#000;border:1px solid #555;border-left:2px solid #858585;border-bottom:2px solid #8a8a8a"></div>
<div class="cb" style="left:3179px;top:255px"></div>
<span class="t" style="left:3206.5px;top:257px;font-size:17px;letter-spacing:-0.52px;">Random order</span>
<div class="cb" style="left:3179px;top:292px"></div>
<span class="t" style="left:3206.5px;top:294px;font-size:17px;letter-spacing:-0.94px;">Loop</span>
<div class="cb" style="left:3179px;top:330px"></div>
<span class="t" style="left:3206.5px;top:332px;font-size:17px;letter-spacing:-0.38px;">Stretch small images</span>
<div class="cb" style="left:3179px;top:367px;width:20px;height:20px;border-radius:5px"></div>
<span class="t" style="left:3206.5px;top:369px;font-size:17px;letter-spacing:-0.39px;">Use audio file</span>
<div class="btn" style="left:3324px;top:364px;width:31px;height:28px;"></div>
<div style="left:3333px;top:382px;width:2px;height:2px;background:#000"></div>
<div style="left:3338px;top:382px;width:2px;height:2px;background:#000"></div>
<div style="left:3344px;top:382px;width:2px;height:2px;background:#000"></div>
<div class="btn" style="left:2802px;top:624px;width:109px;height:32px;"></div>
<span class="t" style="left:2829.5px;top:631px;font-size:17px;letter-spacing:-0.46px;">Open...</span>
<div class="btn" style="left:2923px;top:624px;width:111px;height:32px;"></div>
<span class="t" style="left:2952px;top:631px;font-size:17px;letter-spacing:-0.15px;">Save...</span>
<div class="cb" style="left:3046px;top:630px"></div>
<span class="t" style="left:3073.9px;top:631px;font-size:17px;letter-spacing:-0.16px;">Save relative paths</span>
<div class="btn def" style="left:3255px;top:623px;width:111px;height:33px;"></div>
<span class="t" style="left:3295px;top:630px;font-size:17.5px;letter-spacing:-1.18px;">Play</span>
<div class="btn" style="left:3377px;top:623px;width:111px;height:33px;"></div>
<span class="t" style="left:3408px;top:631px;font-size:17px;letter-spacing:-1.03px;">Cancel</span>
<div class="dlg" style="left:3527px;top:66px;width:725px;height:609px;"><div class="tb"></div></div>
<svg class="a" style="left:3540px;top:75px" width="27" height="27" viewBox="0 0 27 27"><defs><linearGradient id="og" x1="0" y1="0" x2="0" y2="1"><stop offset="0" stop-color="#f9a334"/><stop offset="0.55" stop-color="#f08410"/><stop offset="1" stop-color="#e36c05"/></linearGradient><radialGradient id="rg" cx="0.45" cy="0.4" r="0.6"><stop offset="0" stop-color="#d8340f"/><stop offset="1" stop-color="#b01500"/></radialGradient></defs><ellipse cx="13.2" cy="24" rx="9.5" ry="1.5" fill="#bdbdbd" opacity=".55"/><g fill="url(#og)"><circle cx="9.3" cy="2.9" r="2.05"/><circle cx="16.9" cy="2.9" r="2.05"/><path d="M7.25 3 L11.35 3 L12.1 9 L8 9.5 Z"/><path d="M18.95 3 L14.85 3 L14.1 9 L18.2 9.5 Z"/><circle cx="3.5" cy="7.6" r="2.2"/><circle cx="22.7" cy="7.6" r="2.2"/><path d="M1.6 8.8 L5.2 6.2 L8.6 10.2 L4.6 12.6 Z"/><path d="M24.6 8.8 L21 6.2 L17.6 10.2 L21.6 12.6 Z"/><path d="M0.9 13.3 C4 8 8.8 5.6 13.1 5.6 C17.4 5.6 22.2 8 25.3 13.3 C22.3 19.6 17.6 22.9 13.1 22.9 C8.6 22.9 3.9 19.6 0.9 13.3 Z"/></g><circle cx="13.1" cy="13.9" r="6.9" fill="#d96306"/><circle cx="13.2" cy="13.9" r="6.2" fill="#fff"/><circle cx="13.1" cy="14" r="5.2" fill="#e6760f"/><circle cx="13" cy="14.1" r="4.2" fill="url(#rg)"/></svg>
<span class="t" style="left:3569.5px;top:79px;font-size:18.2px;letter-spacing:-0.52px;color:#000;">Slideshow</span>
<svg class="a" style="left:4140.9px;top:80px" width="10" height="18" viewBox="0 0 10 18"><path d="M1.2 4.9 C1.2 2.5 2.7 1.4 4.4 1.4 C6.2 1.4 7.5 2.6 7.5 4.4 C7.5 6 6.6 6.9 5.6 7.8 C4.6 8.7 4.1 9.5 4.1 10.8 L4.1 12.2" fill="none" stroke="#1a1a1a" stroke-width="1.3"/><rect x="3.3" y="14.3" width="1.7" height="1.9" fill="#1a1a1a"/></svg>
<svg class="a" style="left:4207px;top:80px" width="17" height="17"><path d="M1 1 L16 16 M16 1 L1 16" stroke="#1a1a1a" stroke-width="1.45" fill="none"/></svg>
<div class="pane" style="left:3546px;top:158px;width:686px;height:449px;"></div>
<div class="tab" style="left:3549px;top:131px;width:84px;height:27px;"></div>
<span class="t" style="left:3564px;top:136px;font-size:17px;letter-spacing:-0.3px;">File list</span>
<div class="tab" style="left:3632px;top:131px;width:94px;height:27px;"></div>
<span class="t" style="left:3650.5px;top:136px;font-size:17px;letter-spacing:-0.42px;">Settings</span>
<div class="tab sel" style="left:3725px;top:128px;width:123px;height:31px;"></div>
<span class="t" style="left:3744.5px;top:135px;font-size:17px;letter-spacing:-0.05px;">Information</span>
<div class="cb on" style="left:3567px;top:186px"><svg viewBox="0 0 19 19"><path d="M5.6 10.5 L8.6 12.9 L13.9 7.3" fill="none" stroke="#fff" stroke-width="0.95"/></svg></div>
<span class="t" style="left:3594px;top:187px;font-size:17px;letter-spacing:-0.29px;">Show information</span>
<div class="pane" style="left:3566px;top:257px;width:642px;height:314px;"></div>
<div class="tab sel" style="left:3566px;top:227px;width:90px;height:31px;"></div>
<span class="t" style="left:3584.5px;top:234px;font-size:17.6px;letter-spacing:-0.24px;">Header</span>
<div class="tab" style="left:3655px;top:230px;width:92px;height:27px;"></div>
<span class="t" style="left:3671px;top:234px;font-size:17.6px;letter-spacing:0.22px;">Caption</span>
<div class="tab" style="left:3746px;top:230px;width:91px;height:27px;"></div>
<span class="t" style="left:3763.5px;top:234px;font-size:17.6px;letter-spacing:0.13px;">Footer</span>
<span class="t" style="left:3585.5px;top:292px;font-size:17.6px;letter-spacing:-0.45px;">Left</span>
<div class="ed" style="left:3655px;top:287px;width:499px;height:29px;"></div>
<span class="t" style="left:3658.5px;top:293px;font-size:17px;letter-spacing:0.21px;">{Directory}</span>
<div class="btn" style="left:4161px;top:286px;width:32px;height:31px;"><svg width="31.5" height="31" style="position:absolute;left:-1px;top:-1px"><polygon points="10.35,7.5 10.35,23.5 19.65,15.5" fill="#000"/></svg></div>
<span class="t" style="left:3585.5px;top:334px;font-size:17.6px;letter-spacing:-0.46px;">Center</span>
<div class="ed" style="left:3655px;top:329px;width:499px;height:29px;"></div>
<div class="btn" style="left:4161px;top:328px;width:32px;height:31px;"><svg width="31.5" height="31" style="position:absolute;left:-1px;top:-1px"><polygon points="10.35,7.5 10.35,23.5 19.65,15.5" fill="#000"/></svg></div>
<span class="t" style="left:3585.5px;top:379px;font-size:17.6px;letter-spacing:0.11px;">Right</span>
<div class="ed" style="left:3655px;top:374px;width:499px;height:29px;"></div>
<div class="btn" style="left:4161px;top:373px;width:32px;height:31px;"><svg width="31.5" height="31" style="position:absolute;left:-1px;top:-1px"><polygon points="10.35,7.5 10.35,23.5 19.65,15.5" fill="#000"/></svg></div>
<span class="t" style="left:3586.5px;top:437px;font-size:17px;letter-spacing:-0.84px;">Font</span>
<div class="btn" style="left:3629px;top:430px;width:121px;height:32px;"></div>
<span class="t" style="left:3637.5px;top:437px;font-size:17px;letter-spacing:-0.57px;">MS Shell Dlg 2</span>
<span class="t" style="left:3586.5px;top:482px;font-size:17px;letter-spacing:-0.14px;">Text color</span>
<div class="btn" style="left:3670px;top:473px;width:40px;height:34px;"></div>
<div style="left:3679px;top:479px;width:23px;height:23px;background:#000;border:1px solid #555;border-left:2px solid #858585;border-bottom:2px solid #8a8a8a"></div>
<div class="cb" style="left:3586px;top:524px"></div>
<span class="t" style="left:3614px;top:523px;font-size:17.2px;letter-spacing:0.32px;">Background color</span>
<div class="btn" style="left:3767px;top:517px;width:40px;height:34px;"></div>
<div style="left:3776px;top:523px;width:23px;height:23px;background:#fff;border:1px solid #a2a2a2;border-left:2px solid #8e8e8e;border-top:2px solid #8e8e8e"></div>
<span class="t" style="left:3837.5px;top:524px;font-size:17px;letter-spacing:-0.52px;">Opacity</span>
<div class="sp" style="left:3903px;top:518px;width:57px;height:28px;"></div>
<div class="sb" style="left:3936px;top:520px;width:22px;height:11px;"><svg width="22" height="11"><polygon points="6.1,7 15.9,7 11,1.9" fill="#000"/></svg></div>
<div class="sb dn" style="left:3936px;top:531px;width:22px;height:11px;"><svg width="22" height="11"><polygon points="6.1,2 15.9,2 11,7.1" fill="#000"/></svg></div>
<span class="t" style="left:3907.5px;top:523px;font-size:17px;letter-spacing:-1.18px;">100</span>
<div class="btn" style="left:3547px;top:624px;width:110px;height:32px;"></div>
<span class="t" style="left:3574.5px;top:631px;font-size:17px;letter-spacing:-0.46px;">Open...</span>
<div class="btn" style="left:3668px;top:624px;width:111px;height:32px;"></div>
<span class="t" style="left:3697.5px;top:631px;font-size:17px;letter-spacing:-0.15px;">Save...</span>
<div class="cb" style="left:3792px;top:630px"></div>
<span class="t" style="left:3819.4px;top:631px;font-size:17px;letter-spacing:-0.17px;">Save relative paths</span>
<div class="btn def" style="left:4000px;top:623px;width:111px;height:33px;"></div>
<span class="t" style="left:4040px;top:630px;font-size:17.5px;letter-spacing:-1.18px;">Play</span>
<div class="btn" style="left:4122px;top:623px;width:111px;height:33px;"></div>
<span class="t" style="left:4153.5px;top:631px;font-size:17px;letter-spacing:-1.03px;">Cancel</span>
</body></html>
